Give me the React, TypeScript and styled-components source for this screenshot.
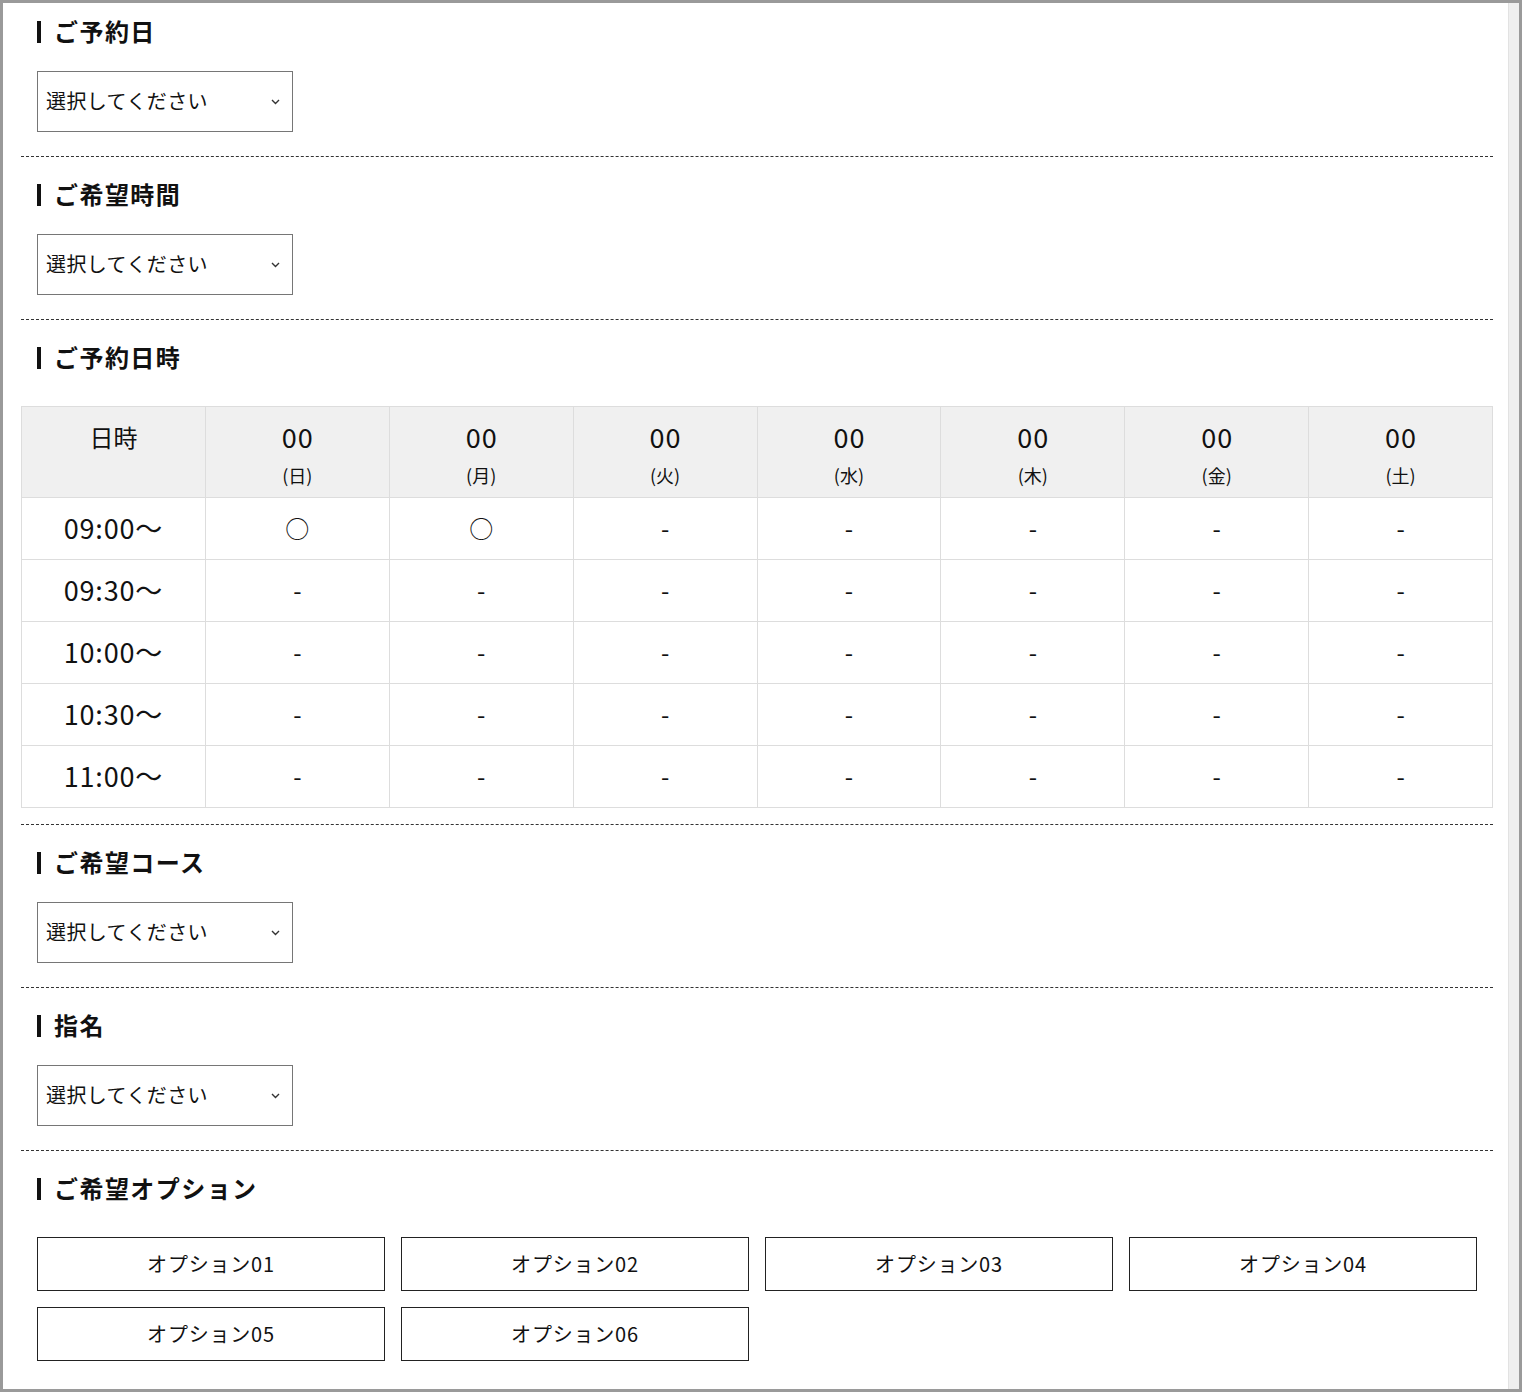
import React from 'react';
import styled, { createGlobalStyle } from 'styled-components';

const GlobalStyle = createGlobalStyle`
  * {
    box-sizing: border-box;
  }
  body {
    margin: 0;
    background: #fff;
    color: #111;
    font-family: "Noto Sans CJK JP", "Noto Sans", sans-serif;
  }
`;

const Frame = styled.div`
  width: 1522px;
  height: 1392px;
  border: 3px solid #9a9a9a;
  display: flex;
  overflow: hidden;
  background: #fff;
`;

const Content = styled.main`
  flex: 1;
  padding: 0 15px 0 18px;
`;

const ScrollTrack = styled.div`
  width: 11px;
  background: #efefef;
  border-left: 1px solid #e2e2e2;
`;

const Section = styled.section<{ $first?: boolean; $tight?: boolean }>`
  padding: ${(p) => (p.$first ? '15px' : '24px')} 0 ${(p) => (p.$tight ? '16px' : '24px')};
  border-top: ${(p) => (p.$first ? 'none' : '1px dashed #333')};
`;

const Heading = styled.h2`
  display: flex;
  align-items: center;
  gap: 13px;
  height: 30px;
  margin: 0;
  padding: 0 0 5px 16px;
  font-size: 24px;
  font-weight: 700;
  letter-spacing: 0.06em;
  color: #111;

  &::before {
    content: '';
    flex-shrink: 0;
    width: 4px;
    height: 22px;
    margin-top: 3px;
    background: #111;
  }
`;

const SelectWrap = styled.div`
  position: relative;
  width: 256px;
  height: 61px;
  margin: 23px 0 0 16px;
  border: 1px solid #767676;
`;

const Select = styled.select`
  appearance: none;
  width: 100%;
  height: 100%;
  border: none;
  outline: none;
  background: transparent;
  padding: 0 0 3px 8px;
  font-family: inherit;
  font-size: 20px;
  letter-spacing: 0.02em;
  color: #111;
`;

const Chevron = styled.svg`
  position: absolute;
  right: 12px;
  top: 50%;
  width: 9px;
  height: 6px;
  margin-top: -3px;
  pointer-events: none;
`;

const Table = styled.table`
  width: 100%;
  margin-top: 32px;
  border-collapse: collapse;
  table-layout: fixed;
`;

const HeadCell = styled.th`
  height: 91px;
  padding: 13px 0 0;
  vertical-align: top;
  border: 1px solid #ddd;
  background: #f0f0f0;
  font-weight: 400;
  color: #111;
`;

const HeadLabel = styled.span`
  display: block;
  font-size: 24px;
  line-height: 34px;
`;

const DateNum = styled.span`
  display: block;
  font-size: 27px;
  line-height: 34px;
  letter-spacing: 0.04em;
  text-indent: 0.04em;
`;

const DayName = styled.span`
  display: block;
  margin-top: 8px;
  font-size: 18px;
  line-height: 26px;
`;

const Cell = styled.td<{ $time?: boolean }>`
  height: 62px;
  padding: 0 0 2px;
  border: 1px solid #ddd;
  text-align: center;
  vertical-align: middle;
  font-size: ${(p) => (p.$time ? '27px' : '24px')};
  letter-spacing: ${(p) => (p.$time ? '0.03em' : '0')};
  color: #111;
`;

const Mark = styled.span`
  font-size: 24px;
`;

const OptionGrid = styled.div`
  display: grid;
  grid-template-columns: repeat(4, 1fr);
  gap: 16px;
  margin-top: 32px;
  padding: 0 16px;
`;

const OptionButton = styled.button`
  height: 54px;
  padding: 0 0 2px;
  border: 1px solid #222;
  background: #fff;
  font-family: inherit;
  font-size: 20px;
  letter-spacing: 0.04em;
  color: #111;
  cursor: pointer;
`;

const days = ['日', '月', '火', '水', '木', '金', '土'];
const times = ['09:00〜', '09:30〜', '10:00〜', '10:30〜', '11:00〜'];
const options = ['01', '02', '03', '04', '05', '06'];

const Dropdown: React.FC = () => (
  <SelectWrap>
    <Select defaultValue="">
      <option value="">選択してください</option>
    </Select>
    <Chevron viewBox="0 0 9 6">
      <path d="M1 1l3.5 3.5L8 1" fill="none" stroke="#333" strokeWidth="1.4" />
    </Chevron>
  </SelectWrap>
);

export default function App() {
  return (
    <>
      <GlobalStyle />
      <Frame>
        <Content>
          <Section $first>
            <Heading>ご予約日</Heading>
            <Dropdown />
          </Section>

          <Section>
            <Heading>ご希望時間</Heading>
            <Dropdown />
          </Section>

          <Section $tight>
            <Heading>ご予約日時</Heading>
            <Table>
              <thead>
                <tr>
                  <HeadCell>
                    <HeadLabel>日時</HeadLabel>
                  </HeadCell>
                  {days.map((d) => (
                    <HeadCell key={d}>
                      <DateNum>00</DateNum>
                      <DayName>({d})</DayName>
                    </HeadCell>
                  ))}
                </tr>
              </thead>
              <tbody>
                {times.map((t, row) => (
                  <tr key={t}>
                    <Cell $time>{t}</Cell>
                    {days.map((d, col) => (
                      <Cell key={d}>
                        {row === 0 && col < 2 ? <Mark>○</Mark> : '-'}
                      </Cell>
                    ))}
                  </tr>
                ))}
              </tbody>
            </Table>
          </Section>

          <Section>
            <Heading>ご希望コース</Heading>
            <Dropdown />
          </Section>

          <Section>
            <Heading>指名</Heading>
            <Dropdown />
          </Section>

          <Section>
            <Heading>ご希望オプション</Heading>
            <OptionGrid>
              {options.map((o) => (
                <OptionButton key={o}>オプション{o}</OptionButton>
              ))}
            </OptionGrid>
          </Section>
        </Content>
        <ScrollTrack />
      </Frame>
    </>
  );
}
